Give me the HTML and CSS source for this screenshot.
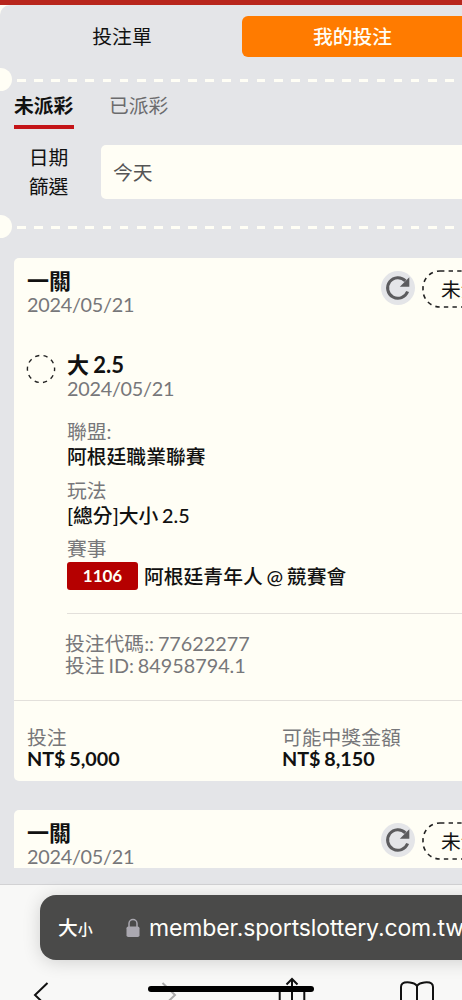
FILE: index.html
```
<!DOCTYPE html>
<html lang="zh-Hant">
<head>
    <meta charset="UTF-8">
    <meta name="viewport" content="width=device-width, initial-scale=1.0">
    <title>我的投注</title>
    <link rel="stylesheet" href="styles.css">
</head>
<body>
    <div class="topbar"></div>
    <main class="panel">
        <nav class="main-tabs">
            <div class="main-tab">投注單</div>
            <div class="main-tab active">我的投注</div>
        </nav>

        <div class="divider"><span class="notch"></span><span class="dashes"></span></div>

        <div class="sub-tabs">
            <div class="sub-tab active">未派彩</div>
            <div class="sub-tab">已派彩</div>
        </div>

        <div class="filter">
            <div class="filter-label">日期<br>篩選</div>
            <div class="filter-select">今天</div>
        </div>

        <div class="divider"><span class="notch"></span><span class="dashes"></span></div>

        <div class="bets">
            <section class="card">
                <header class="card-head">
                    <div>
                        <h2>一關</h2>
                        <p class="date">2024/05/21</p>
                    </div>
                    <div class="actions">
                        <span class="refresh">
                            <svg viewBox="0 0 34 34" width="34" height="34">
                                <path d="M26.6 20.5A10.3 10.3 0 1 1 24.4 9.9" fill="none" stroke="#5c5c5e" stroke-width="3"/>
                                <path d="M28.3 6.3V15.8H18.8Z" fill="#5c5c5e"/>
                            </svg>
                        </span>
                        <span class="status">
                            <svg class="status-line" viewBox="0 0 90 38" width="90" height="38">
                                <rect x="1" y="1" width="88" height="36" rx="17" fill="none" stroke="#222" stroke-width="1.6" stroke-dasharray="4.4 4.2"/>
                            </svg>
                            未派彩
                        </span>
                    </div>
                </header>

                <div class="bet">
                    <svg class="ring" viewBox="0 0 30 30" width="30" height="30">
                        <circle cx="15" cy="15" r="13.6" fill="none" stroke="#222" stroke-width="1.4" stroke-dasharray="4.2 4.345" stroke-dashoffset="2.1"/>
                    </svg>
                    <div class="bet-info">
                        <h3>大 2.5</h3>
                        <p class="date">2024/05/21</p>
                        <dl>
                            <dt>聯盟:</dt>
                            <dd>阿根廷職業聯賽</dd>
                            <dt>玩法</dt>
                            <dd>[總分]大小 2.5</dd>
                            <dt>賽事</dt>
                            <dd class="match"><span class="code">1106</span>阿根廷青年人 @ 競賽會</dd>
                        </dl>
                        <div class="ids">
                            <p>投注代碼:: 77622277</p>
                            <p>投注 ID: 84958794.1</p>
                        </div>
                    </div>
                </div>

                <footer class="totals">
                    <div class="total">
                        <p>投注</p>
                        <strong>NT$ 5,000</strong>
                    </div>
                    <div class="total">
                        <p>可能中獎金額</p>
                        <strong>NT$ 8,150</strong>
                    </div>
                </footer>
            </section>

            <section class="card">
                <header class="card-head">
                    <div>
                        <h2>一關</h2>
                        <p class="date">2024/05/21</p>
                    </div>
                    <div class="actions">
                        <span class="refresh">
                            <svg viewBox="0 0 34 34" width="34" height="34">
                                <path d="M26.6 20.5A10.3 10.3 0 1 1 24.4 9.9" fill="none" stroke="#5c5c5e" stroke-width="3"/>
                                <path d="M28.3 6.3V15.8H18.8Z" fill="#5c5c5e"/>
                            </svg>
                        </span>
                        <span class="status">
                            <svg class="status-line" viewBox="0 0 90 38" width="90" height="38">
                                <rect x="1" y="1" width="88" height="36" rx="17" fill="none" stroke="#222" stroke-width="1.6" stroke-dasharray="4.4 4.2"/>
                            </svg>
                            未派彩
                        </span>
                    </div>
                </header>
            </section>
        </div>
    </main>

    <div class="browser">
        <div class="address">
            <span class="text-size">大<small>小</small></span>
            <svg class="lock" viewBox="0 0 14 20" width="14" height="20">
                <path d="M3 9V5.5a4 4 0 0 1 8 0V9" fill="none" stroke="#aaa8b0" stroke-width="1.5"/>
                <rect x="0.5" y="8.5" width="13" height="10.5" rx="1.8" fill="#aaa8b0"/>
            </svg>
            <span class="url">member.sportslottery.com.tw</span>
        </div>
        <div class="toolbar">
            <svg class="icon-back" viewBox="0 0 16 26" width="16" height="26" fill="none" stroke="#111" stroke-width="2">
                <path d="M14.5 1L2 13L14.5 25"/>
            </svg>
            <svg class="icon-forward" viewBox="0 0 16 26" width="16" height="26" fill="none" stroke="#aaa" stroke-width="2">
                <path d="M1.5 1L14 13L1.5 25"/>
            </svg>
            <svg class="icon-share" viewBox="0 0 28 36" width="28" height="36" fill="none" stroke="#111" stroke-width="2">
                <path d="M14 24V2M8.5 7.5L14 2L19.5 7.5M9 12H1.7V34H26.3V12H19"/>
            </svg>
            <svg class="icon-book" viewBox="0 0 36 28" width="36" height="28" fill="none" stroke="#111" stroke-width="2">
                <path d="M18 28V5C15.5 0.7 6 0.5 3.5 2.5Q2 3.8 2 6V26C6 22.5 15 22.5 18 28C21 22.5 30 22.5 34 26V6Q34 3.8 32.5 2.5C30 0.5 20.5 0.7 18 5"/>
            </svg>
        </div>
        <div class="home-indicator"></div>
    </div>
</body>
</html>
```
FILE: styles.css
```
* {
    box-sizing: border-box;
}

body {
    margin: 0;
    width: 462px;
    height: 1000px;
    overflow: hidden;
    background: #fffef5;
    color: #111;
    font-family: Lato, 'Noto Sans CJK TC', sans-serif;
    font-size: 19.8px;
    line-height: 24px;
    word-spacing: -1.2px;
}

h2, h3, p, dl, dd {
    margin: 0;
}

.topbar {
    height: 5px;
    background: #b8261c;
}

.panel {
    height: 879px;
    padding-top: 11px;
    background: #e4e5e8;
    border-top-left-radius: 10px;
    overflow: hidden;
}

.main-tabs {
    display: flex;
    padding-left: 2px;
}

.main-tab {
    flex: none;
    width: 240px;
    height: 41px;
    line-height: 41px;
    text-align: center;
}

.main-tab.active {
    width: 220px;
    padding-left: 1px;
    border-radius: 6px 0 0 6px;
    background: #ff7b00;
    color: #fffef5;
    font-weight: 500;
}

.divider {
    display: flex;
    align-items: center;
    height: 23px;
    gap: 5.5px;
}

.main-tabs + .divider {
    margin-top: 11px;
}

.notch {
    width: 11.5px;
    height: 23px;
    border-radius: 0 12px 12px 0;
    background: #fffef5;
}

.dashes {
    flex: 1;
    height: 3px;
    margin-top: 2px;
    background: repeating-linear-gradient(to right, #fffef5 0 8.7px, transparent 8.7px 17.12px);
}

.sub-tabs {
    display: flex;
    gap: 35px;
    margin-top: 3px;
    padding-left: 14px;
}

.sub-tab {
    height: 35px;
    width: 60px;
    line-height: 22px;
    color: #6b6b6d;
}

.sub-tab.active {
    color: #111;
    font-weight: 700;
    border-bottom: 4px solid #c41418;
}

.filter {
    display: flex;
    align-items: center;
    height: 54px;
    margin: 16px 0;
}

.filter-label {
    width: 97px;
    line-height: 29px;
    text-align: center;
}

.filter-select {
    flex: 1;
    margin-left: 4px;
    padding-left: 12px;
    height: 54px;
    line-height: 54px;
    border-radius: 5px 0 0 5px;
    background: #fffef5;
    color: #555;
}

.bets {
    height: 610px;
    margin-top: 20px;
    padding-left: 14px;
    overflow: hidden;
}

.card {
    height: 523px;
    margin-bottom: 29px;
    border-radius: 5px 0 0 5px;
    background: #fffef5;
}

.card-head {
    display: flex;
    justify-content: space-between;
    height: 95px;
    padding: 12px 0 0 13px;
}

.card-head h2 {
    font-size: 22px;
    line-height: 22px;
}

.date {
    color: #77777a;
    line-height: 24px;
    letter-spacing: -0.25px;
}

.actions {
    display: flex;
    gap: 7px;
    width: 81px;
}

.refresh {
    flex: none;
    width: 34px;
    height: 34px;
    margin-top: 1px;
    border-radius: 50%;
    background: #e4e5e8;
}

.refresh svg {
    display: block;
}

.status {
    position: relative;
    flex: none;
    width: 90px;
    height: 38px;
    padding-left: 19px;
    line-height: 39px;
}

.status-line {
    position: absolute;
    left: 0;
    top: 0;
}

.bet {
    display: flex;
    gap: 11px;
    height: 347px;
    padding-left: 12px;
}

.ring {
    flex: none;
    margin-top: 1px;
}

.bet-info {
    flex: 1;
}

.bet-info h3 {
    font-size: 22px;
    line-height: 24px;
    font-weight: 700;
}

.bet-info .date {
    line-height: 23px;
}

.bet-info dl {
    margin-top: 19px;
}

dt {
    color: #77777a;
    line-height: 25px;
}

dd {
    margin-bottom: 9.5px;
    line-height: 24px;
    font-weight: 500;
}

.match {
    display: flex;
    align-items: center;
    gap: 6px;
    height: 29px;
}

.code {
    width: 71px;
    height: 28px;
    border-radius: 3px;
    background: #b50000;
    color: #fffef5;
    font-size: 17px;
    font-weight: 700;
    line-height: 28px;
    text-align: center;
}

.ids {
    margin-top: 23px;
    border-top: 1px solid #e3e0db;
    padding-top: 18px;
    color: #77777a;
    line-height: 22px;
}

.ids p {
    margin-left: -2px;
}

.totals {
    display: flex;
    border-top: 1px solid #e3e0db;
    padding: 25px 0 0 13px;
    line-height: 22px;
}

.total {
    flex: none;
    width: 255px;
}

.total p {
    color: #77777a;
}

.total strong {
    display: block;
    margin-top: -1px;
}

.browser {
    position: relative;
    height: 116px;
    padding: 10px 0 0 40px;
    border-top: 1px solid #d2d2d4;
    background: #f8f8f7;
}

.address {
    display: flex;
    align-items: center;
    width: 460px;
    height: 65px;
    padding-left: 18px;
    border-radius: 16px;
    background: #4a4a49;
    box-shadow: 0 2px 18px rgba(0, 0, 0, 0.16);
    color: #fffefa;
}

.text-size {
    width: 68px;
    font-weight: 500;
}

.text-size small {
    font-size: 15px;
}

.url {
    margin-left: 9px;
    font-family: Inter, sans-serif;
    font-size: 23px;
    letter-spacing: -0.13px;
}

.toolbar {
    display: flex;
    height: 40px;
    margin-left: -7px;
}

.icon-back {
    margin-top: 22px;
}

.icon-forward {
    margin: 22px 0 0 112px;
}

.icon-share {
    margin: 17px 0 0 101px;
}

.icon-book {
    margin: 21px 0 0 93px;
}

.home-indicator {
    position: absolute;
    left: 148px;
    top: 101px;
    width: 166px;
    height: 6px;
    border-radius: 3px;
    background: #000;
}
```
